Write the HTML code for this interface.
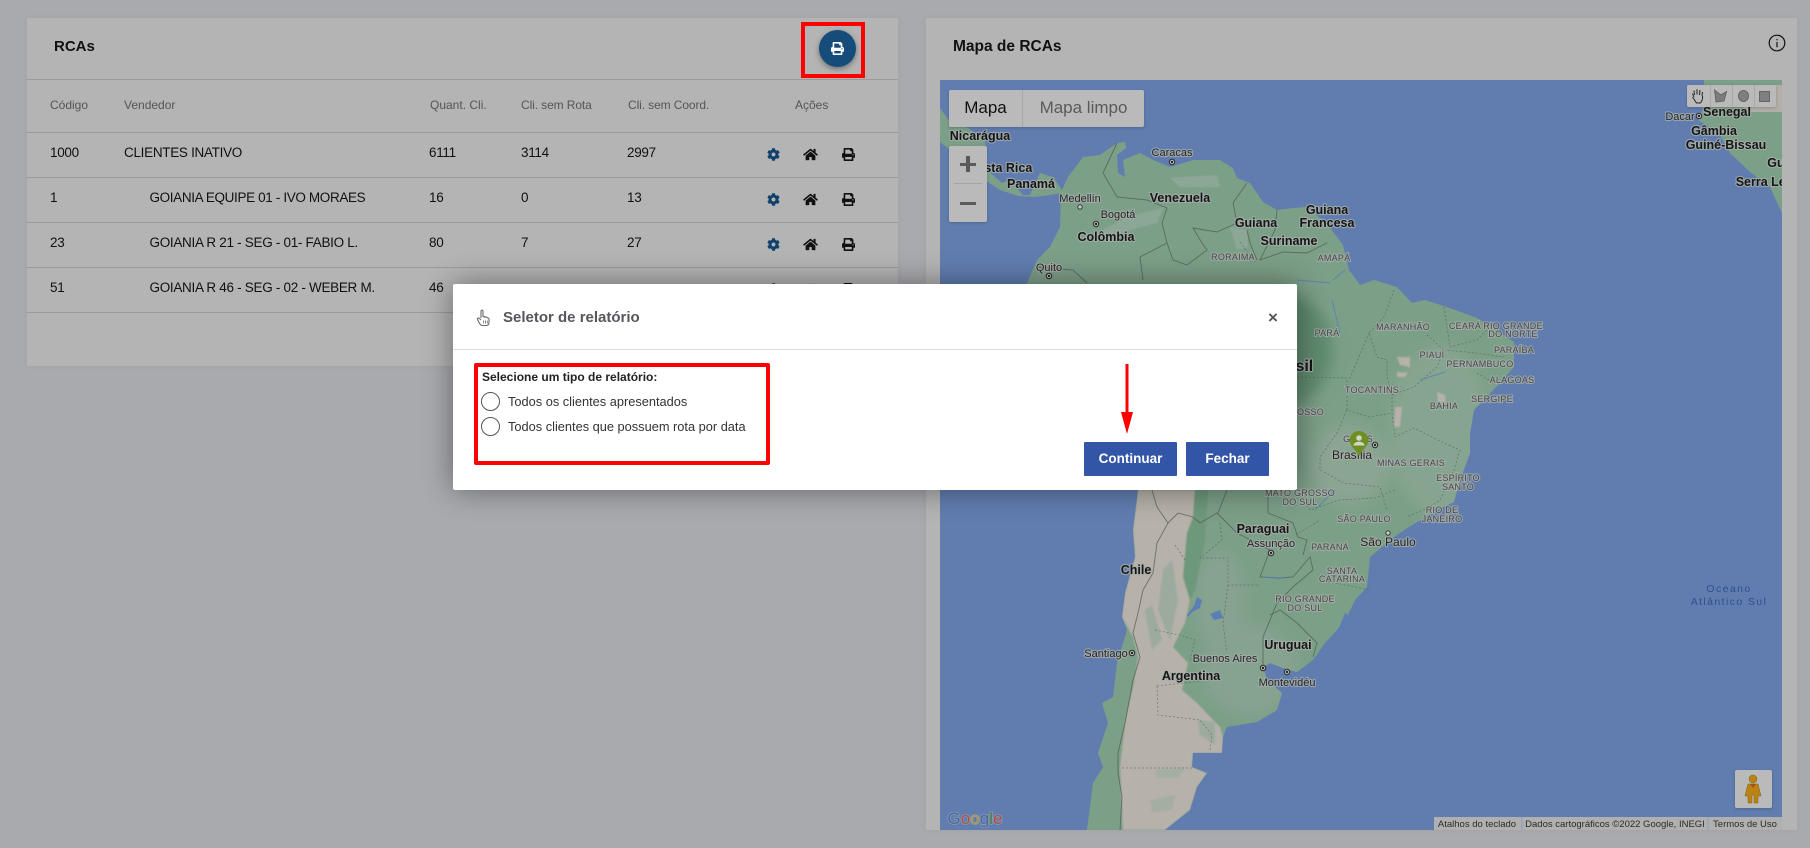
<!DOCTYPE html>
<html lang="pt-BR"><head><meta charset="utf-8"><title>RCAs</title>
<style>
html,body{margin:0;padding:0;width:1810px;height:848px;overflow:hidden;background:#a9aaae;font-family:"Liberation Sans",sans-serif;color:#111}
*{box-sizing:border-box}
.a{position:absolute;white-space:nowrap;line-height:20px;height:20px}
.card{position:absolute;background:#b4b4b4;box-shadow:0 0 6px rgba(0,0,0,.05)}
.ln{position:absolute;height:1px;background:#9b9b9b;left:27px;width:871px}
.th{font-size:12px;color:#555}
.td{font-size:13.5px;color:#111;letter-spacing:-.3px}
.i{position:absolute}
#map{position:absolute;left:0;top:0}
#map text{font-family:"Liberation Sans",sans-serif;text-anchor:middle;paint-order:stroke;stroke:#a6aeaa;stroke-opacity:.8;stroke-width:2.2px;stroke-linejoin:round}
.c{font-size:12.5px;font-weight:bold;fill:#161616}
.t{font-size:11px;fill:#262626}
.s{font-size:9px;letter-spacing:.25px;fill:#484848}
.ctl{position:absolute;background:#bababa;box-shadow:0 1px 3px rgba(0,0,0,.2)}
.modal{position:absolute;left:453px;top:284px;width:844px;height:206px;background:#fff;border-radius:2px;box-shadow:0 0 30px rgba(0,0,0,.42)}
.btn{position:absolute;top:442px;height:34px;background:#3355a7;color:#fff;font-weight:bold;font-size:13.5px;line-height:34px;text-align:center;border-radius:1px}
.radio{position:absolute;left:481px;width:19px;height:19px;border:1px solid #555;border-radius:50%;background:#fff}
</style></head><body>

<div class="card" style="left:27px;top:18px;width:871px;height:348px"></div>
<div class="card" style="left:926px;top:18px;width:871px;height:812px"></div>

<div class="a" style="left:54px;top:37px;font-size:15px;font-weight:bold">RCAs</div>
<div class="ln" style="top:79px"></div><div class="ln" style="top:132px"></div><div class="ln" style="top:177px"></div><div class="ln" style="top:222px"></div><div class="ln" style="top:267px"></div><div class="ln" style="top:312px"></div>

<div class="a th" style="left:50px;top:95px">Código</div>
<div class="a th" style="left:124px;top:95px">Vendedor</div>
<div class="a th" style="left:430px;top:95px">Quant. Cli.</div>
<div class="a th" style="left:521px;top:95px;letter-spacing:-.1px">Cli. sem Rota</div>
<div class="a th" style="left:628px;top:95px;letter-spacing:-.1px">Cli. sem Coord.</div>
<div class="a th" style="left:795px;top:95px">Ações</div>

<div class="a td" style="left:50px;top:143px">1000</div><div class="a td" style="left:124px;top:143px">CLIENTES INATIVO</div><div class="a td" style="left:429px;top:143px">6111</div><div class="a td" style="left:521px;top:143px">3114</div><div class="a td" style="left:627px;top:143px">2997</div>
<div class="a td" style="left:50px;top:188px">1</div><div class="a td" style="left:149.5px;top:188px;letter-spacing:-.36px">GOIANIA EQUIPE 01 - IVO MORAES</div><div class="a td" style="left:429px;top:188px">16</div><div class="a td" style="left:521px;top:188px">0</div><div class="a td" style="left:627px;top:188px">13</div>
<div class="a td" style="left:50px;top:233px">23</div><div class="a td" style="left:149.5px;top:233px">GOIANIA R 21 - SEG - 01- FABIO L.</div><div class="a td" style="left:429px;top:233px">80</div><div class="a td" style="left:521px;top:233px">7</div><div class="a td" style="left:627px;top:233px">27</div>
<div class="a td" style="left:50px;top:278px">51</div><div class="a td" style="left:149.5px;top:278px">GOIANIA R 46 - SEG - 02 - WEBER M.</div><div class="a td" style="left:429px;top:278px">46</div>

<svg width="0" height="0" style="position:absolute"><defs>
<path id="gear" d="M487.4 315.7l-42.6-24.6c4.3-23.2 4.3-47 0-70.2l42.6-24.6c4.9-2.8 7.1-8.6 5.5-14-11.1-35.6-30-67.8-54.7-94.6-3.8-4.1-10-5.1-14.8-2.3L380.8 110c-17.9-15.4-38.5-27.3-60.8-35.1V25.8c0-5.6-3.9-10.5-9.4-11.7-36.7-8.2-74.3-7.8-109.2 0-5.5 1.2-9.4 6.1-9.4 11.7V75c-22.2 7.9-42.8 19.8-60.8 35.1L88.7 85.5c-4.9-2.8-11-1.9-14.8 2.3-24.7 26.7-43.6 58.9-54.7 94.6-1.7 5.4.6 11.2 5.5 14L67.3 221c-4.3 23.2-4.3 47 0 70.2l-42.6 24.6c-4.9 2.8-7.1 8.6-5.5 14 11.1 35.6 30 67.8 54.7 94.6 3.8 4.1 10 5.1 14.8 2.3l42.6-24.6c17.9 15.4 38.5 27.3 60.8 35.1v49.2c0 5.6 3.9 10.5 9.4 11.7 36.7 8.2 74.3 7.8 109.2 0 5.5-1.2 9.4-6.1 9.4-11.7v-49.2c22.2-7.9 42.8-19.8 60.8-35.1l42.6 24.6c4.9 2.8 11 1.9 14.8-2.3 24.7-26.7 43.6-58.9 54.7-94.6 1.5-5.5-.7-11.3-5.6-14.1zM256 336c-44.1 0-80-35.9-80-80s35.9-80 80-80 80 35.9 80 80-35.9 80-80 80z"/>
<path id="home" d="M280.37 148.26L96 300.11V464a16 16 0 0 0 16 16l112.06-.29a16 16 0 0 0 15.92-16V368a16 16 0 0 1 16-16h64a16 16 0 0 1 16 16v95.64a16 16 0 0 0 16 16.05L464 480a16 16 0 0 0 16-16V300L295.67 148.26a12.19 12.19 0 0 0-15.3 0zM571.6 251.47L488 182.56V44.05a12 12 0 0 0-12-12h-56a12 12 0 0 0-12 12v72.61L318.47 43a48 48 0 0 0-61 0L4.34 251.47a12 12 0 0 0-1.6 16.9l25.5 31A12 12 0 0 0 45.15 301l235.22-193.74a12.19 12.19 0 0 1 15.3 0L530.9 301a12 12 0 0 0 16.9-1.6l25.5-31a12 12 0 0 0-1.7-16.93z"/>
<path id="print" d="M448 192V77.25c0-8.49-3.37-16.62-9.37-22.63L393.37 9.37c-6-6-14.14-9.37-22.63-9.37H96C78.33 0 64 14.33 64 32v160c-35.35 0-64 28.65-64 64v112c0 8.84 7.16 16 16 16h48v96c0 17.67 14.33 32 32 32h320c17.67 0 32-14.33 32-32v-96h48c8.84 0 16-7.16 16-16V256c0-35.35-28.65-64-64-64zm-64 256H128v-96h256v96zm0-224H128V64h192v48c0 8.84 7.16 16 16 16h48v96zm48 72c-13.25 0-24-10.75-24-24 0-13.26 10.75-24 24-24s24 10.74 24 24c0 13.25-10.75 24-24 24z"/>
<g id="dot"><circle r="3.2" fill="#2a2a2a"/><circle r="2.2" fill="#b9bdb9"/><circle r="1.2" fill="#222"/></g>
<g id="ring"><circle r="2.6" fill="#2a2a2a"/><circle r="1.7" fill="#c9cbc7"/></g>
</defs></svg>

<svg class="i" style="left:767px;top:148px" width="13" height="13" viewBox="0 0 512 512" fill="#0f3f6b"><use href="#gear"/></svg>
<svg class="i" style="left:803px;top:148px" width="15" height="13" viewBox="0 0 576 512" fill="#111"><use href="#home"/></svg>
<svg class="i" style="left:842px;top:148px" width="13" height="13" viewBox="0 0 512 512" fill="#111"><use href="#print"/></svg>
<svg class="i" style="left:767px;top:193px" width="13" height="13" viewBox="0 0 512 512" fill="#0f3f6b"><use href="#gear"/></svg>
<svg class="i" style="left:803px;top:193px" width="15" height="13" viewBox="0 0 576 512" fill="#111"><use href="#home"/></svg>
<svg class="i" style="left:842px;top:193px" width="13" height="13" viewBox="0 0 512 512" fill="#111"><use href="#print"/></svg>
<svg class="i" style="left:767px;top:238px" width="13" height="13" viewBox="0 0 512 512" fill="#0f3f6b"><use href="#gear"/></svg>
<svg class="i" style="left:803px;top:238px" width="15" height="13" viewBox="0 0 576 512" fill="#111"><use href="#home"/></svg>
<svg class="i" style="left:842px;top:238px" width="13" height="13" viewBox="0 0 512 512" fill="#111"><use href="#print"/></svg>
<svg class="i" style="left:767px;top:283px" width="13" height="13" viewBox="0 0 512 512" fill="#0f3f6b"><use href="#gear"/></svg>
<svg class="i" style="left:803px;top:283px" width="15" height="13" viewBox="0 0 576 512" fill="#111"><use href="#home"/></svg>
<svg class="i" style="left:842px;top:283px" width="13" height="13" viewBox="0 0 512 512" fill="#111"><use href="#print"/></svg>

<div style="position:absolute;left:819px;top:30px;width:37px;height:37px;border-radius:50%;background:#164c7a;box-shadow:0 2px 6px rgba(0,0,0,.4)"></div>
<svg class="i" style="left:831px;top:42px" width="13" height="13" viewBox="0 0 512 512" fill="#fff"><use href="#print"/></svg>
<div style="position:absolute;left:801px;top:22px;width:64px;height:56px;border:4px solid #fe0000"></div>

<div class="a" style="left:953px;top:37px;font-size:15.5px;font-weight:bold">Mapa de RCAs</div>
<svg class="i" style="left:1768px;top:34px" width="18" height="18" viewBox="0 0 18 18" fill="none" stroke="#111" stroke-width="1.2"><circle cx="9" cy="9" r="7.8"/><path d="M9 8v5.2M9 5v1.4"/></svg>

<svg id="map" width="1810" height="848" viewBox="0 0 1810 848">
<defs>
<clipPath id="mc"><rect x="940" y="80" width="842" height="750"/></clipPath>
<clipPath id="sa"><path id="saP" d="M940 108L950 122L968 128L985 140L987 170L1002 183L1010 180L1023 195L1030 195L1040 173L1053 177L1062 190L1068 177L1083 157L1100 155L1117 143L1125 142L1126 148L1117 155L1118 173L1125 177L1123 160L1140 153L1153 160L1170 167L1193 160L1220 160L1233 168L1237 178L1250 183L1263 202L1277 210L1293 208L1307 207L1328 225L1343 245L1349 270L1360 285L1374 280L1397 287L1412 303L1425 300L1447 307L1477 318L1514 342L1514 367L1500 383L1474 410L1470 433L1470 453L1460 480L1454 502L1437 510L1409 527L1394 537L1370 557L1367 587L1355 600L1347 617L1337 630L1325 643L1313 660L1297 672L1283 668L1270 663L1263 667L1267 680L1282 693L1277 710L1257 722L1227 727L1223 737L1222 753L1193 753L1192 767L1207 773L1197 787L1190 810L1165 830L1087 830L1093 783L1103 767L1098 753L1108 723L1102 703L1113 697L1117 663L1127 630L1122 617L1125 593L1135 557L1133 530L1138 490L1100 420L1030 330L1027 283L1037 260L1050 247L1060 227L1061 193L1050 195L1035 197L1018 196L1000 190L985 180L960 158L940 142Z"/></clipPath>
<filter id="b1"><feGaussianBlur stdDeviation=".8"/></filter>
<filter id="b6"><feGaussianBlur stdDeviation="7"/></filter>
</defs>
<g clip-path="url(#mc)">
<rect x="940" y="80" width="842" height="750" fill="#617db0"/>
<!-- Africa -->
<path d="M1704 80L1704 107L1698 120L1719 133L1730 153L1750 172L1770 187L1782 213L1782 80Z" fill="#7c9f88"/>
<path d="M1735 85L1782 85L1782 112L1745 112Z" fill="#b3afa8"/>
<!-- South America -->
<use href="#saP" fill="#7c9f88"/>
<g clip-path="url(#sa)">
<g filter="url(#b6)">
<ellipse cx="1285" cy="350" rx="48" ry="55" fill="#5f8a6e"/>
<ellipse cx="1440" cy="430" rx="50" ry="85" fill="#86a590"/>
<ellipse cx="1350" cy="465" rx="40" ry="40" fill="#8aa592"/>
<ellipse cx="1250" cy="670" rx="48" ry="45" fill="#86a390"/>
<ellipse cx="1220" cy="600" rx="25" ry="50" fill="#86a390"/>
</g>
<g filter="url(#b1)">
<path d="M1138 490L1195 490L1193 517L1187 533L1183 577L1190 600L1185 623L1173 647L1188 663L1182 690L1197 703L1220 727L1223 737L1222 753L1193 753L1192 767L1207 773L1197 787L1190 810L1165 830L1123 830L1120 767L1125 723L1133 687L1138 657L1133 637L1122 617L1125 593L1135 557L1133 530Z" fill="#b6b1a9"/>
<path d="M1195 490L1208 490L1205 540L1195 590L1190 600L1183 577L1187 533L1193 517Z" fill="#6e987c"/>
<path d="M1163 570L1172 560L1178 600L1170 640L1158 610Z" fill="#9cab9c"/>
<path d="M1145 610L1152 605L1162 640L1152 650Z M1198 720L1215 722L1215 745L1200 735Z" fill="#9cab9c"/>
<path d="M1155 770L1185 768L1178 778L1158 778Z M1150 800L1175 795L1172 810L1152 812Z" fill="#a4aea1"/>
<path d="M1103 230L1127 217L1163 208L1157 223L1140 227L1100 240Z" fill="#8da797"/>
<path d="M1230 227L1247 230L1248 247L1237 250Z" fill="#8da797"/>
<path d="M1170 178L1217 175L1220 187L1180 187Z" fill="#8da797"/>
<path d="M1397 357L1410 357L1410 367L1400 365Z M1437 392L1445 395L1446 403L1438 403Z M1395 407L1402 407L1400 427L1394 427Z M1397 372L1408 373L1405 377L1397 377Z" fill="#b6b1a9"/>
</g>
</g>
<!-- solid borders -->
<g fill="none" stroke="#4d564f" stroke-width=".9" opacity=".7">
<path d="M1152 490L1157 507L1168 523L1178 513L1193 517L1200 523L1217 513L1237 533L1270 550L1260 577L1280 578L1293 577L1310 557L1313 570L1293 587L1277 603L1263 637L1263 653L1263 667"/>
<path d="M1168 523L1157 543L1153 573L1143 590L1138 613L1133 633L1140 657L1133 680L1125 723L1118 753L1118 773L1122 797L1120 830"/>
<path d="M1227 490L1218 513M1268 490L1268 513L1293 523L1298 537L1307 540L1303 555"/>
<path d="M1270 615L1280 610L1297 623L1317 643L1313 657"/>
<path d="M1117 143L1103 173L1117 197L1147 200L1167 208L1162 223L1167 243L1173 260L1187 265L1207 250L1202 243L1193 228L1217 232L1237 223L1233 203L1247 183"/>
<path d="M1277 210L1275 230L1260 260L1283 252L1307 253L1327 243M1247 230L1250 243L1257 260M1167 243L1140 257L1143 280M1037 267L1073 270L1087 283"/>
</g>
<g fill="none" stroke="#4d564f" stroke-width=".7" stroke-dasharray="2 2" opacity=".65">
<path d="M1394 290L1384 317L1369 333L1377 357L1387 360L1387 377L1392 395L1392 413L1395 437L1414 428L1444 443L1460 450L1454 470L1440 500L1430 507L1407 517"/>
<path d="M1297 377L1350 378L1369 333M1347 380L1347 410L1369 417L1392 413M1347 410L1337 433L1320 457L1320 470L1344 483L1380 487L1387 510"/>
<path d="M1392 395L1414 387L1437 367L1444 350L1467 352L1504 357M1427 335L1444 350M1444 307L1450 347L1477 340L1487 330M1477 373L1494 383"/>
<path d="M1220 523L1222 540L1200 558L1228 558L1228 585L1260 585M1228 585L1223 623L1227 653M1157 686L1210 680M1122 768L1193 768M1175 545L1185 560M1155 630L1180 635L1195 640L1190 660M1157 686L1158 715L1200 720L1212 735L1210 750"/>
<path d="M1300 495L1310 510L1340 500L1375 498L1395 490M1296 535L1320 520M1320 580L1370 590M1240 242L1255 262"/>
</g>
<!-- water -->
<g fill="none" stroke="#5b7fb5" stroke-width="1" opacity=".85">
<path d="M1263 577L1285 578M1297 280L1330 283M1333 280L1345 270M1340 333L1332 300M1420 380L1445 372M1335 490L1315 510"/>
</g>
<path d="M1187 615L1194 606L1197 597L1202 600L1200 608L1192 612L1188 617Z M1210 614L1220 610L1223 618L1214 620Z M1337 633L1345 613L1348 615L1345 625L1339 635Z" fill="#5b7fb5"/>

<text class="c" x="980" y="140">Nicarágua</text>
<text class="c" x="1000" y="172">Costa Rica</text>
<text class="c" x="1031" y="188">Panamá</text>
<text class="t" x="1172" y="156">Caracas</text>
<text class="t" x="1080" y="202">Medellín</text>
<text class="t" x="1118" y="218">Bogotá</text>
<text class="c" x="1106" y="241">Colômbia</text>
<text class="c" x="1180" y="202">Venezuela</text>
<text class="c" x="1256" y="227">Guiana</text>
<text class="c" x="1327" y="214">Guiana</text>
<text class="c" x="1327" y="227">Francesa</text>
<text class="c" x="1289" y="245">Suriname</text>
<text class="s" x="1233" y="260">RORAIMA</text>
<text class="s" x="1334" y="261">AMAPÁ</text>
<text class="t" x="1049" y="271">Quito</text>
<text class="t" x="1680" y="120">Dacar</text>
<text class="c" x="1727" y="116">Senegal</text>
<text class="c" x="1714" y="135">Gâmbia</text>
<text class="c" x="1726" y="149">Guiné-Bissau</text>
<text class="c" x="1785" y="167">Guiné</text>
<text class="c" x="1768" y="186">Serra Leoa</text>
<text class="s" x="1327" y="336">PARÁ</text>
<text class="s" x="1403" y="330">MARANHÃO</text>
<text class="s" x="1465" y="329">CEARÁ</text>
<text class="s" x="1513" y="329">RIO GRANDE</text>
<text class="s" x="1513" y="337">DO NORTE</text>
<text class="s" x="1514" y="353">PARAÍBA</text>
<text class="s" x="1432" y="358">PIAUÍ</text>
<text class="s" x="1480" y="367">PERNAMBUCO</text>
<text class="s" x="1512" y="383">ALAGOAS</text>
<text class="s" x="1372" y="393">TOCANTINS</text>
<text class="s" x="1492" y="402">SERGIPE</text>
<text class="s" x="1444" y="409">BAHIA</text>
<text class="s" x="1289" y="415">MATO GROSSO</text>
<text class="c" x="1291" y="371" style="font-size:16px">Brasil</text>
<text class="s" x="1358" y="442">GOIÁS</text>
<text class="t" x="1352" y="459" style="font-size:12px">Brasília</text>
<text class="s" x="1411" y="466">MINAS GERAIS</text>
<text class="s" x="1458" y="481">ESPÍRITO</text>
<text class="s" x="1458" y="490">SANTO</text>
<text class="s" x="1442" y="513">RIO DE</text>
<text class="s" x="1442" y="522">JANEIRO</text>
<text class="s" x="1364" y="522">SÃO PAULO</text>
<text class="s" x="1300" y="496">MATO GROSSO</text>
<text class="s" x="1300" y="505">DO SUL</text>
<text class="c" x="1263" y="533">Paraguai</text>
<text class="t" x="1271" y="547">Assunção</text>
<text class="s" x="1330" y="550">PARANÁ</text>
<text class="t" x="1388" y="546" style="font-size:12px">São Paulo</text>
<text class="s" x="1342" y="574">SANTA</text>
<text class="s" x="1342" y="582">CATARINA</text>
<text class="c" x="1136" y="574">Chile</text>
<text class="s" x="1305" y="602">RIO GRANDE</text>
<text class="s" x="1305" y="611">DO SUL</text>
<text class="c" x="1288" y="649">Uruguai</text>
<text class="t" x="1225" y="662">Buenos Aires</text>
<text class="t" x="1287" y="686">Montevidéu</text>
<text class="t" x="1106" y="657">Santiago</text>
<text class="c" x="1191" y="680">Argentina</text>
<g style="font-size:10.5px;letter-spacing:1.4px"><text x="1729" y="592" style="fill:#2d508f;stroke:none">Oceano</text><text x="1729" y="605" style="fill:#2d508f;stroke:none">Atlântico Sul</text></g>

<use href="#dot" x="1172" y="162"/><use href="#dot" x="1096" y="224"/><use href="#dot" x="1049" y="276"/><use href="#dot" x="1375" y="445"/><use href="#dot" x="1271" y="553"/><use href="#dot" x="1263" y="668"/><use href="#dot" x="1287" y="672"/><use href="#dot" x="1132" y="653"/><use href="#dot" x="1699" y="116"/>
<use href="#ring" x="1080" y="207"/><use href="#ring" x="1388" y="533"/>

<path d="M1359 456C1355 449 1349.500 445 1349.500 440.500A9.500 9.500 0 0 1 1368.500 440.500C1368.500 445 1363 449 1359 456Z" fill="#6f8f22"/>
<circle cx="1359" cy="438" r="2.800" fill="#cfd6c4"/><path d="M1353.500 445.500C1353.500 440.500 1364.500 440.500 1364.500 445.500Z" fill="#cfd6c4"/>

<rect x="1434" y="817" width="348" height="13" fill="#b0b0b0"/>
<path d="M1522 817v13M1708 817v13" stroke="#8f9cb8" stroke-width="1"/>
<g style="font-size:9.500px"><text x="1477" y="827" style="fill:#2b2b2b;stroke:none">Atalhos do teclado</text><text x="1615" y="827" style="fill:#2b2b2b;stroke:none">Dados cartográficos ©2022 Google, INEGI</text><text x="1745" y="827" style="fill:#2b2b2b;stroke:none">Termos de Uso</text></g>
<g style="font-size:17px"><text x="975" y="824" style="stroke:#a9adb3;stroke-width:1.600px;stroke-opacity:.6"><tspan fill="#45699f">G</tspan><tspan fill="#a84f46">o</tspan><tspan fill="#b2973b">o</tspan><tspan fill="#45699f">g</tspan><tspan fill="#46804f">l</tspan><tspan fill="#a84f46">e</tspan></text></g>
</g>
</svg>

<div class="ctl" style="left:949px;top:90px;width:195px;height:37px;border-radius:2px"></div>
<div style="position:absolute;left:1022px;top:90px;width:1px;height:37px;background:#a8a8a8"></div>
<div class="a" style="left:949px;top:98px;width:73px;text-align:center;font-size:17px;color:#111">Mapa</div>
<div class="a" style="left:1023px;top:98px;width:121px;text-align:center;font-size:17px;color:#5a5a5a">Mapa limpo</div>
<div class="ctl" style="left:949px;top:146px;width:38px;height:76px;border-radius:2px"></div>
<div style="position:absolute;left:954px;top:183px;width:28px;height:1px;background:#a5a5a5"></div>
<div style="position:absolute;left:960px;top:162.500px;width:16px;height:3.500px;background:#5a5a5a"></div>
<div style="position:absolute;left:966.300px;top:156px;width:3.500px;height:16px;background:#5a5a5a"></div>
<div style="position:absolute;left:960px;top:201.500px;width:16px;height:3.500px;background:#5a5a5a"></div>

<div class="ctl" style="left:1687px;top:85px;width:89px;height:22px;border-radius:2px"></div>
<div style="position:absolute;left:1710px;top:85px;width:1px;height:22px;background:#a8a8a8"></div>
<div style="position:absolute;left:1732px;top:85px;width:1px;height:22px;background:#a8a8a8"></div>
<div style="position:absolute;left:1754px;top:85px;width:1px;height:22px;background:#a8a8a8"></div>
<svg class="i" style="left:1691px;top:88px" width="14" height="16" viewBox="0 0 14 16" fill="none" stroke="#222" stroke-width="1"><path d="M3 9L1.500 5.500M3.500 7L3 2.500M6 6.500V1.200M8.500 7L9 2M11 8L11.500 4M11.500 8C12 11 11 13 9.500 15H5.500C4 13 3 11 1.500 9"/></svg>
<svg class="i" style="left:1713px;top:88px" width="15" height="16" viewBox="0 0 15 16" fill="#7d7d7d" stroke="#5d5d5d" stroke-width=".8"><path d="M1.500 2L8 7L13.500 3.500L11 13L3 14Z"/></svg>
<div style="position:absolute;left:1738px;top:90px;width:11px;height:12px;border-radius:50%;background:#7f7f7f;border:1px solid #666"></div>
<div style="position:absolute;left:1759px;top:91px;width:11px;height:11px;background:#7f7f7f;border:1px solid #666"></div>

<div class="ctl" style="left:1735px;top:770px;width:37px;height:38px;border-radius:2px"></div>
<svg class="i" style="left:1744px;top:774px" width="18" height="30" viewBox="0 0 18 30"><circle cx="9" cy="5" r="4" fill="#b98414" stroke="#7e6110" stroke-width=".5"/><path d="M4 10H14L17 22H14V29H10V21H8V29H4V22H1Z" fill="#b98414" stroke="#7e6110" stroke-width=".5"/><path d="M6 10L9 14L12 10Z" fill="#a84f28"/></svg>

<div class="modal"></div>
<div style="position:absolute;left:453px;top:349px;width:844px;height:1px;background:#dcdcdc"></div>
<svg class="i" style="left:476px;top:309px" width="14" height="18" viewBox="0 0 14 18" fill="none" stroke="#6a6a6a" stroke-width="1.100"><path d="M5 9V2.500C5 .8 7 .8 7 2.500V8M7 8C8 7.200 9 7.400 9 8.600M9 8.300C10 7.700 11 8 11 9M11 9C12 8.700 13 9 13 10.500V13C13 15.500 12 16.500 10.500 16.500H6.500C5 16.500 4 15.500 3 13.500L1.500 10.500C1 9.300 2.500 8.500 3.500 9.500L5 11"/><path d="M7.500 11.500V14.500M9.500 11.500V14.500M11.300 11.500V14.500" stroke-width=".8"/></svg>
<div class="a" style="left:503px;top:308px;font-size:15px;font-weight:bold;color:#55565e">Seletor de relatório</div>
<div class="a" style="left:1268px;top:308px;font-size:17px;font-weight:bold;color:#555">×</div>

<div style="position:absolute;left:474px;top:363px;width:296px;height:102px;border:4px solid #fe0000;border-radius:2px"></div>
<div class="a" style="left:482px;top:367px;font-size:12px;font-weight:bold;color:#222">Selecione um tipo de relatório:</div>
<div class="radio" style="top:391.500px"></div>
<div class="a" style="left:508px;top:392px;font-size:12.800px;color:#333">Todos os clientes apresentados</div>
<div class="radio" style="top:416.500px"></div>
<div class="a" style="left:508px;top:417px;font-size:12.800px;color:#333">Todos clientes que possuem rota por data</div>

<svg class="i" style="left:1118px;top:362px" width="18" height="74" viewBox="0 0 18 74"><path d="M9 2V52" stroke="#fe0000" stroke-width="3" fill="none"/><path d="M3 50H15L9 72Z" fill="#fe0000"/></svg>

<div class="btn" style="left:1084px;width:93px">Continuar</div>
<div class="btn" style="left:1186px;width:83px">Fechar</div>
</body></html>
